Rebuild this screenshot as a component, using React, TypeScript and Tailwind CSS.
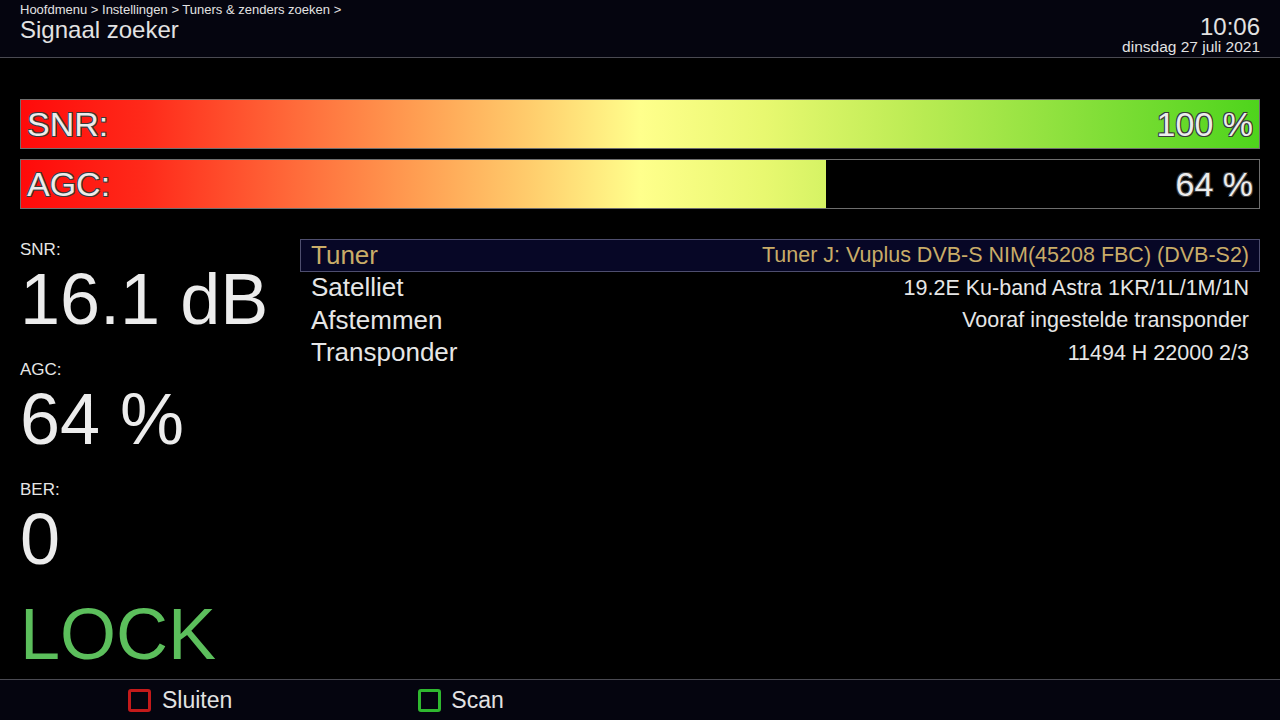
import React from "react";

const FONT = { fontFamily: '"Liberation Sans", Arial, sans-serif' };

// colour ramp shared by every level bar; it always spans the full bar width
const RAMP =
  "bg-[linear-gradient(90deg,#ff0a0a_0%,#ff2a1a_10%,#ff6a3a_22%,#ff9e52_32%,#ffcc6c_41%,#ffff8c_50%,#e8f870_60%,#bcec54_72%,#8ae03c_85%,#4ed41c_100%)]";

const OUTLINE =
  "[text-shadow:-1px_-1px_0_#3a3a3a,1px_-1px_0_#3a3a3a,-1px_1px_0_#3a3a3a,1px_1px_0_#3a3a3a]";

const LevelBar = ({ label, value, fill }: { label: string; value: string; fill: number }) => (
  <div className="relative h-[50px] w-full border border-[#6e6e6e] bg-black">
    <div className="h-full overflow-hidden" style={{ width: `${fill}%` }}>
      <div className={`h-full w-[1238px] ${RAMP}`} />
    </div>
    <div className="absolute inset-0 flex items-center justify-between px-[6px] text-[34px] text-[#ececec]">
      <span className={OUTLINE}>{label}</span>
      <span className={OUTLINE}>{value}</span>
    </div>
  </div>
);

const Readout = ({ label, value }: { label: string; value: string }) => (
  <div className="mb-[25px]">
    <div className="h-[20px] text-[17px] leading-[22px] text-[#e6e6e6]">{label}</div>
    <div className="mt-[5px] h-[70px] text-[72px] leading-[70px] text-[#ececec]">{value}</div>
  </div>
);

const rows = [
  { name: "Tuner", value: "Tuner J: Vuplus DVB-S NIM(45208 FBC) (DVB-S2)", active: true },
  { name: "Satelliet", value: "19.2E Ku-band Astra 1KR/1L/1M/1N" },
  { name: "Afstemmen", value: "Vooraf ingestelde transponder" },
  { name: "Transponder", value: "11494 H 22000 2/3" },
];

export default function App() {
  return (
    <div className="flex h-[720px] w-[1280px] flex-col overflow-hidden bg-black" style={FONT}>
      {/* header */}
      <div className="flex h-[58px] shrink-0 items-start justify-between border-b border-[#4a4a52] bg-[#05050f] px-[20px]">
        <div className="text-[#e2e2e2]">
          <div className="mt-[3px] text-[13px] leading-[14px]">
            Hoofdmenu &gt; Instellingen &gt; Tuners &amp; zenders zoeken &gt;
          </div>
          <div className="text-[24px] leading-[26px]">Signaal zoeker</div>
        </div>
        <div className="mt-[15px] flex flex-col items-end text-[#e2e2e2]">
          <div className="text-[24px] leading-[24px]">10:06</div>
          <div className="text-[15.5px] leading-[15px]">dinsdag 27 juli 2021</div>
        </div>
      </div>

      {/* main */}
      <div className="flex-1 px-[20px] pt-[41px]">
        <div className="flex flex-col gap-[10px]">
          <LevelBar label="SNR:" value="100 %" fill={100} />
          <LevelBar label="AGC:" value="64 %" fill={65} />
        </div>

        <div className="mt-[30px] flex">
          <div className="w-[280px] shrink-0">
            <Readout label="SNR:" value="16.1 dB" />
            <Readout label="AGC:" value="64 %" />
            <Readout label="BER:" value="0" />
            <div className="mt-[13px] text-[72px] leading-[70px] text-[#5cbf5c]">LOCK</div>
          </div>

          <div className="flex-1">
            {rows.map((r) => (
              <div
                key={r.name}
                className={`flex h-[32.5px] items-center justify-between px-[10px] ${
                  r.active ? "border border-[#4e4e6e] bg-[#070726] text-[#c9ac68]" : "border border-transparent text-[#e6e6e6]"
                }`}
              >
                <span className="text-[26px]">{r.name}</span>
                <span className="text-[21.5px]">{r.value}</span>
              </div>
            ))}
          </div>
        </div>
      </div>

      {/* footer */}
      <div className="flex h-[41px] shrink-0 items-center border-t border-[#4a4a52] bg-[#05050f] text-[23px] text-[#e2e2e2]">
        <div className="ml-[128px] flex items-center">
          <span className="h-[23px] w-[23px] rounded-[3px] border-[3px] border-[#c41a1a]" />
          <span className="ml-[11px]">Sluiten</span>
        </div>
        <div className="ml-[186px] flex items-center">
          <span className="h-[23px] w-[23px] rounded-[3px] border-[3px] border-[#2fb82f]" />
          <span className="ml-[10px]">Scan</span>
        </div>
      </div>
    </div>
  );
}
